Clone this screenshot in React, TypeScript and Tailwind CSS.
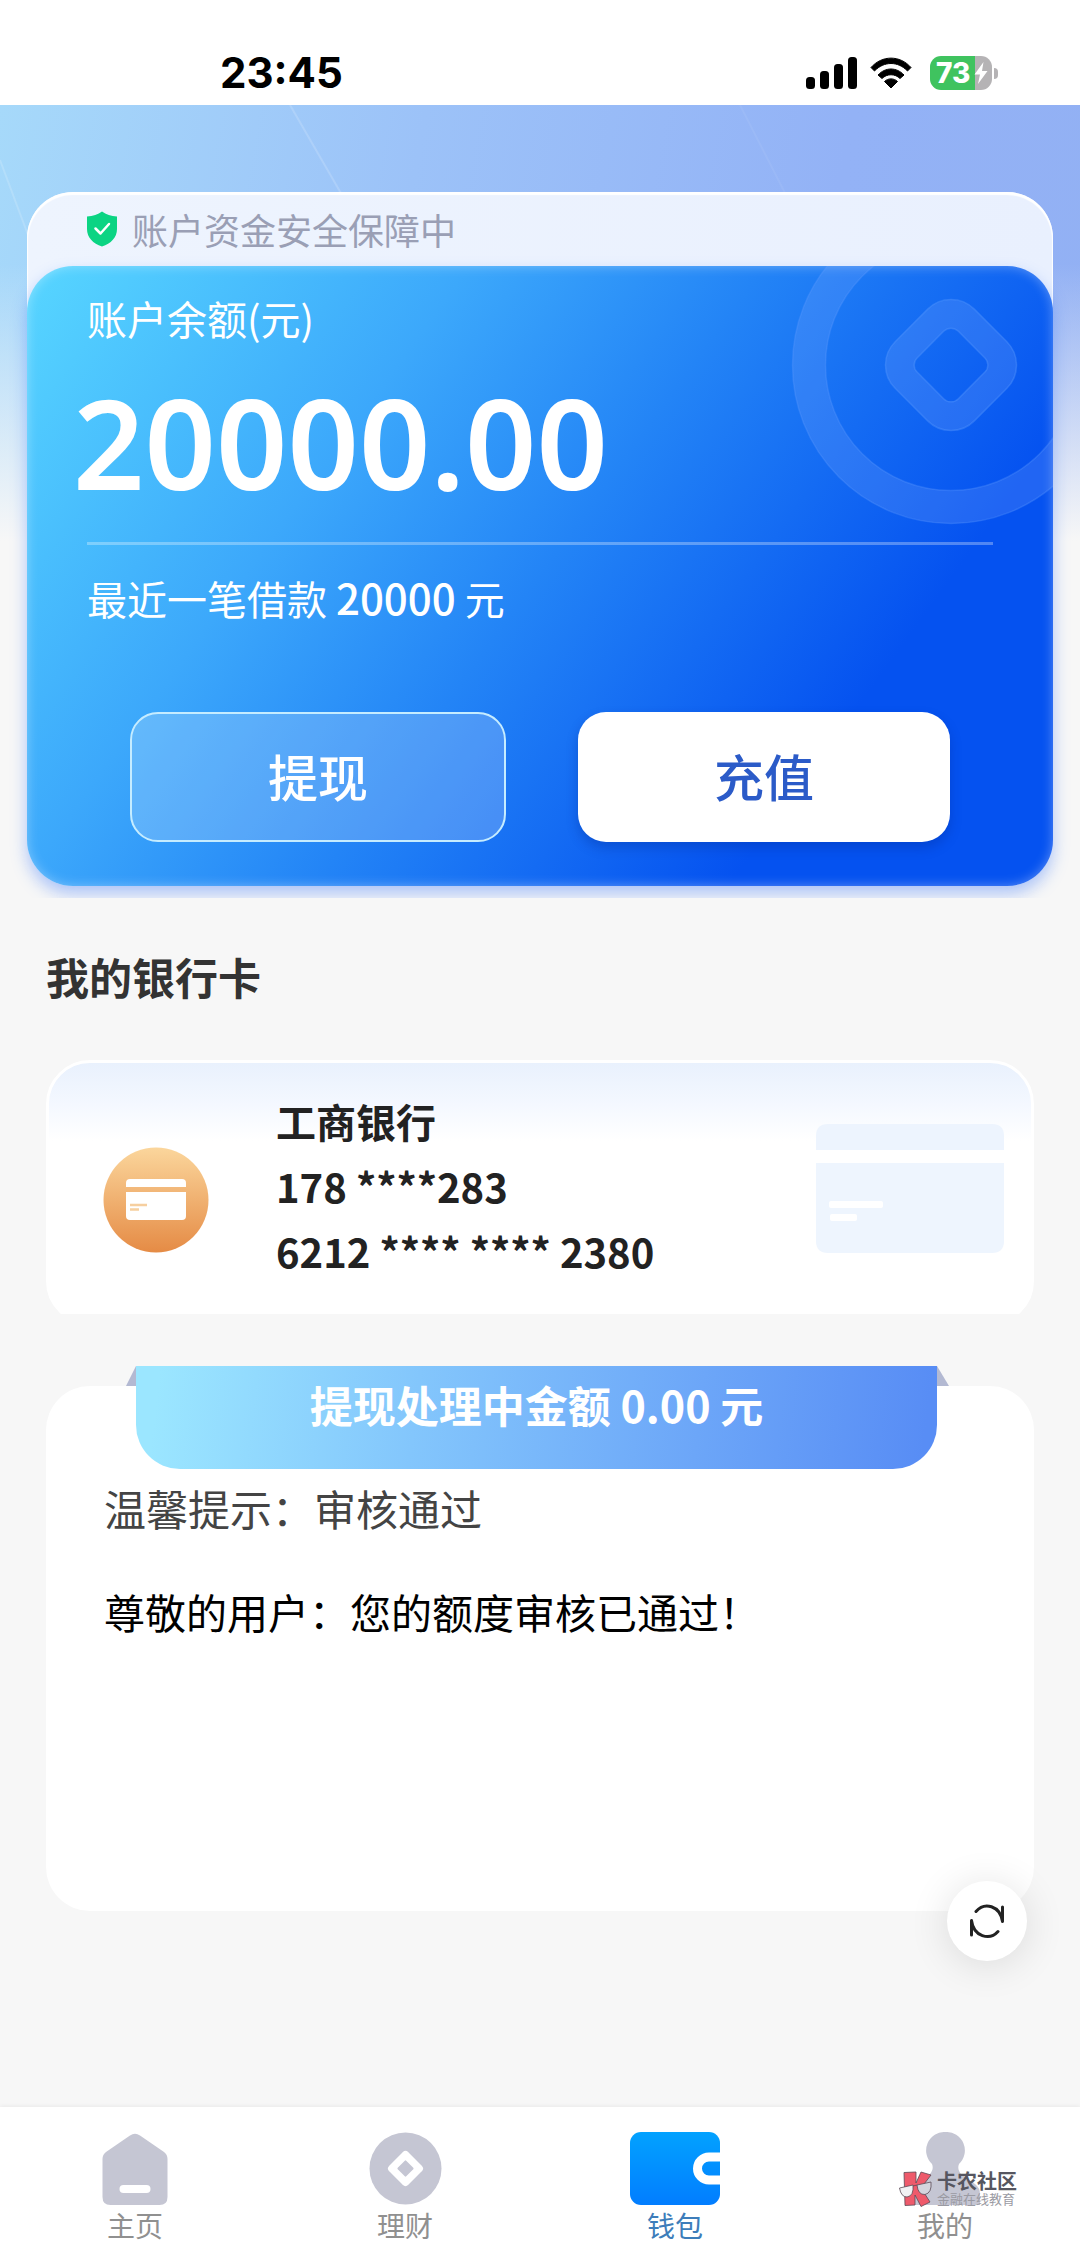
import type { ReactNode } from "react";

function SignalIcon() {
  return (
    <svg width="52" height="34" viewBox="0 0 52 34" aria-hidden="true">
      <rect x="0" y="21" width="9" height="12" rx="3.5" />
      <rect x="14" y="15" width="9" height="18" rx="3.5" />
      <rect x="28" y="8" width="9" height="25" rx="3.5" />
      <rect x="42" y="1" width="9" height="32" rx="3.5" />
    </svg>
  );
}

function WifiIcon() {
  return (
    <svg width="42" height="32" viewBox="0 0 42 32" aria-hidden="true">
      <path d="M1 10.5C12 -2 30 -2 41 10.5L37.5 14C28 4 14 4 4.500 14Z" strokeLinejoin="round" stroke="#000" strokeWidth="1" />
      <path d="M8 18C15.500 10 26.500 10 34 18L30 21.500C25 16.500 17 16.500 12 21.500Z" strokeLinejoin="round" stroke="#000" strokeWidth="1" />
      <path d="M14.500 24.500C18 21 24 21 27.500 24.500L21 31Z" strokeLinejoin="round" stroke="#000" strokeWidth="1" />
    </svg>
  );
}

function Battery() {
  return (
    <div className="flex items-center gap-[2px]">
      <div className="relative flex h-[34px] w-[62px] items-center overflow-hidden rounded-[11px] bg-[linear-gradient(to_right,#3fc35f_72%,#b5b3b5_72%)] pl-[6px]">
        <span className="font-['Inter'] text-[28px] leading-[34px] font-extrabold text-white">73</span>
        <svg width="14" height="22" viewBox="0 0 14 22" className="absolute right-[4px]" aria-hidden="true">
          <path d="M9.500 0L0.500 12.500H6L4 22L13.500 9H8Z" fill="#fff" />
        </svg>
      </div>
      <div className="h-[11px] w-[4px] rounded-r-full bg-[#b5b3b5]" />
    </div>
  );
}

function ShieldIcon() {
  return (
    <svg width="32" height="36" viewBox="0 0 32 36" aria-hidden="true">
      <path d="M16 0.500C20 3.500 25 5 31 5.500V18C31 26.500 25 32.500 16 35.500C7 32.500 1 26.500 1 18V5.500C7 5 12 3.500 16 0.500Z" fill="#0bd483" />
      <path d="M9.500 17.500L14.500 22.500L23 13" fill="none" stroke="#fff" strokeWidth="2.500" strokeLinecap="round" strokeLinejoin="round" />
    </svg>
  );
}

function CoinMark() {
  return (
    <svg width="320" height="320" viewBox="0 0 320 320" className="absolute -top-[61px] -right-[58px]" aria-hidden="true">
      <circle cx="160" cy="160" r="142" fill="none" stroke="#8fb4ff" strokeOpacity="0.2" strokeWidth="33" />
      <circle cx="160" cy="160" r="158.500" fill="none" stroke="#5f9dff" strokeOpacity="0.3" strokeWidth="1.500" />
      <circle cx="160" cy="160" r="125.500" fill="none" stroke="#5f9dff" strokeOpacity="0.3" strokeWidth="1.500" />
      <g transform="rotate(45 160 160)" stroke="#5f9dff" strokeOpacity="0.35" strokeWidth="1.500">
        <path
          fillRule="evenodd"
          fill="#8fb4ff"
          fillOpacity="0.2"
          d="M137 104H183A33 33 0 0 1 216 137V183A33 33 0 0 1 183 216H137A33 33 0 0 1 104 183V137A33 33 0 0 1 137 104ZM141 131A10 10 0 0 0 131 141V179A10 10 0 0 0 141 189H179A10 10 0 0 0 189 179V141A10 10 0 0 0 179 131Z"
        />
      </g>
    </svg>
  );
}

function HeaderRays() {
  return (
    <svg width="100%" height="200" className="absolute top-0 left-0" fill="none" stroke="#fff" strokeOpacity="0.16" strokeWidth="2" aria-hidden="true">
      <path d="M0 55L28 130" />
      <path d="M290 0L342 90" />
      <path d="M740 0L786 90" strokeOpacity="0.06" />
    </svg>
  );
}

function BankBadge() {
  return (
    <svg width="106" height="106" viewBox="0 0 106 106" className="shrink-0" aria-hidden="true">
      <defs>
        <linearGradient id="badge" x1="0" y1="0" x2="0" y2="1">
          <stop offset="0" stopColor="#fbd69c" />
          <stop offset="1" stopColor="#e58b45" />
        </linearGradient>
      </defs>
      <circle cx="53" cy="53" r="52.500" fill="url(#badge)" />
      <path d="M23 40V36Q23 32 27 32H79Q83 32 83 36V40Z" fill="#fff" />
      <path d="M23 45H83V69Q83 73 79 73H27Q23 73 23 69Z" fill="#fff" />
      <path d="M27 58H44M27 62.500H36" stroke="#f6cf9f" strokeWidth="2.500" />
    </svg>
  );
}

function CardWatermark() {
  return (
    <svg width="188" height="130" viewBox="0 0 188 130" className="shrink-0" aria-hidden="true">
      <path d="M0 26V12Q0 0 12 0H176Q188 0 188 12V26Z" fill="#edf4fe" />
      <path d="M0 39H188V117Q188 129 176 129H12Q0 129 0 117Z" fill="#eef5fe" />
      <rect x="13" y="77" width="54" height="7" rx="2" fill="#fff" />
      <rect x="14" y="90" width="27" height="7" rx="2" fill="#fff" />
    </svg>
  );
}

function RefreshIcon() {
  return (
    <svg width="36" height="36" viewBox="0 0 36 36" fill="none" stroke="#222" strokeWidth="3" strokeLinecap="round" strokeLinejoin="round" aria-hidden="true">
      <path d="M7 8.500C15.500 -1.500 31 2.500 33.500 18.500V4" />
      <path d="M29 28.500C20.500 38 4.500 33.500 2.500 17.500V32" />
    </svg>
  );
}

function HomeIcon() {
  return (
    <svg width="66" height="73" viewBox="0 0 66 73" aria-hidden="true">
      <path d="M28 3.500Q33 0 38 3.500L62 20Q65.500 22.500 65.500 27V65Q65.500 73 57.500 73H8.500Q0.500 73 0.500 65V27Q0.500 22.500 4 20Z" fill="#c5c6d3" />
      <rect x="17.500" y="53" width="31" height="8" rx="4" fill="#fff" />
    </svg>
  );
}

function CoinIcon() {
  return (
    <svg width="73" height="73" viewBox="0 0 73 73" aria-hidden="true">
      <circle cx="36.500" cy="36.500" r="36" fill="#c5c6d3" />
      <rect x="23" y="23" width="27" height="27" rx="4" fill="#fff" transform="rotate(45 36.500 36.500)" />
      <rect x="30.500" y="30.500" width="12" height="12" rx="1" fill="#c5c6d3" transform="rotate(45 36.500 36.500)" />
    </svg>
  );
}

function WalletIcon() {
  return (
    <svg width="90" height="73" viewBox="0 0 90 73" aria-hidden="true">
      <defs>
        <linearGradient id="wallet" x1="0" y1="0" x2="0" y2="1">
          <stop offset="0" stopColor="#02a2ff" />
          <stop offset="1" stopColor="#027dff" />
        </linearGradient>
      </defs>
      <rect width="90" height="73" rx="11" fill="url(#wallet)" />
      <path d="M91 25H79A11.500 11.500 0 0 0 79 48H91" fill="none" stroke="#fff" strokeWidth="9" />
    </svg>
  );
}

function PersonIcon() {
  return (
    <svg width="73" height="73" viewBox="0 0 73 73" aria-hidden="true">
      <path d="M36.500 0A18.500 18.500 0 0 1 50 32C48.500 36 49.500 39 52 42L66 52Q71 56 71 62V73H2V62Q2 56 7 52L21 42C23.500 39 24.500 36 23 32A18.500 18.500 0 0 1 36.500 0Z" fill="#c5c6d3" />
    </svg>
  );
}

function CommunityMark() {
  return (
    <div className="pointer-events-none absolute top-[64px] right-[63px] flex items-center gap-[4px]">
      <svg width="34" height="36" viewBox="0 0 34 36" stroke="#5a4a55" strokeWidth="0.8" aria-hidden="true">
        <path d="M5 1.500L17 1V12L22 1L32 4L22 17L31 31L22 35.500L16 24V34L6 34.500Z" fill="#ee5a6b" />
        <path d="M0.500 17L14 14Q15 25 8 26Q2 26 0.500 17Z" fill="#f1f1f3" />
        <path d="M18 14L32 11Q33 22 26 23.500Q19 24 18 14Z" fill="#d4d5de" />
        <path d="M14 15L18 14" />
      </svg>
      <div className="flex flex-col text-left">
        <span className="text-[20px] leading-[20px] font-bold text-[#565660]">卡农社区</span>
        <span className="text-[13px] leading-[16px] text-[#9a9aa2]">金融在线教育</span>
      </div>
    </div>
  );
}

function Tab({ label, active, children }: { label: string; active?: boolean; children: ReactNode }) {
  return (
    <a href="#" className="flex flex-1 flex-col items-center pt-[25px]">
      {children}
      <span className={active ? "text-[28px] leading-[40px] text-[#3d7dba]" : "text-[28px] leading-[40px] text-[#909090]"}>{label}</span>
    </a>
  );
}

export default function App() {
  return (
    <div className="flex min-h-screen flex-col bg-[#f7f7f7] font-['Noto_Sans_CJK_SC',sans-serif]">
      <header className="flex h-[105px] items-end justify-between bg-white pr-[82px] pb-[15px] pl-[220px]">
        <time className="font-['Inter'] text-[42px] leading-[34px] font-bold text-black">23:45</time>
        <div className="flex h-[34px] items-center gap-[12px]">
          <SignalIcon />
          <WifiIcon />
          <div className="pl-[6px]">
            <Battery />
          </div>
        </div>
      </header>

      <main className="flex flex-1 flex-col">
        <section className="relative overflow-hidden bg-[linear-gradient(to_bottom,rgba(247,247,247,0)_20%,#f7f7f7_55%),linear-gradient(100deg,#a6d9fa_0%,#9cc2f8_35%,#93b2f6_70%,#92b0f3_100%)] px-[27px] pt-[87px] pb-[12px]">
          <HeaderRays />
          <div className="relative rounded-[46px] bg-[linear-gradient(90deg,#eef4fe,#e9f0fe)] shadow-[inset_0_2px_1px_1px_#fff]">
            <div className="flex h-[74px] items-center gap-[14px] px-[59px]">
              <ShieldIcon />
              <span className="text-[36px] leading-[48px] text-[#9a9fb5]">账户资金安全保障中</span>
            </div>

            <div className="relative overflow-hidden rounded-[46px] bg-[linear-gradient(126deg,#57d6ff_0%,#3ca8fb_30%,#2384f6_50%,#0552f0_78%)] pt-[28px] pb-[44px] text-white shadow-[0_8px_16px_rgba(60,120,250,0.4),inset_0_0_12px_rgba(255,255,255,0.35)]">
              <CoinMark />
              <p className="px-[60px] text-[40px] leading-[48px]">账户余额(元)</p>
              <p className="px-[46px] font-['Noto_Sans'] text-[125px] leading-[200px] font-semibold">20000.00</p>
              <div className="px-[60px]">
                <hr className="border-t-[3px] border-white/30" />
                <p className="mt-[28px] text-[40px] leading-[48px]">
                  最近一笔借款 <span className="text-[42px] font-medium">20000</span> 元
                </p>
                <div className="mt-[90px] flex gap-[72px] px-[43px]">
                  <button type="button" className="h-[130px] flex-1 rounded-[28px] border-2 border-[#c5ecff] bg-white/20 pb-[4px] text-[50px] font-medium">
                    提现
                  </button>
                  <button type="button" className="h-[130px] flex-1 rounded-[28px] bg-white pb-[4px] text-[50px] font-medium text-[#2b5bc8] shadow-[0_6px_12px_rgba(0,40,140,0.3)]">
                    充值
                  </button>
                </div>
              </div>
            </div>
          </div>
        </section>

        <div className="px-[46px] pt-[48px]">
          <h2 className="text-[43px] leading-[60px] font-bold text-[#333]">我的银行卡</h2>

          <section className="mt-[54px] overflow-hidden">
            <div className="-mb-[11px] flex h-[265px] items-center rounded-[44px] border-[3px] border-white bg-[linear-gradient(to_bottom,#e9f1fd_0%,#f4f8ff_16%,#fff_30%)] pr-[27px] pb-[8px] pl-[54px]">
              <div className="pt-[23px]">
                <BankBadge />
              </div>
              <div className="flex-1 pb-[4px] pl-[67px] text-[40px] leading-[65px] font-bold text-[#222]">
                <p>工商银行</p>
                <p>178 ****283</p>
                <p>6212 **** **** 2380</p>
              </div>
              <CardWatermark />
            </div>
          </section>

          <section className="mt-[52px] flow-root pt-[20px]">
            <div className="flex min-h-[525px] flex-col rounded-[44px] bg-white">
              <div className="relative -mt-[20px] mr-[97px] ml-[90px] h-[103px] rounded-b-[44px] bg-[linear-gradient(97deg,#9be6ff_3%,#83c6fc_35%,#6ca6f8_70%,#588df5_98%)] text-center text-[43px] leading-[76px] font-bold text-white">
                <svg width="10" height="20" viewBox="0 0 10 20" className="absolute top-0 -left-[10px]" aria-hidden="true">
                  <path d="M10 0V20H0Z" fill="#b3b9d2" />
                </svg>
                提现处理中金额 0.00 元
                <svg width="12" height="20" viewBox="0 0 12 20" className="absolute top-0 -right-[12px]" aria-hidden="true">
                  <path d="M0 0V20H12Z" fill="#b3b9d2" />
                </svg>
              </div>
              <div className="px-[58px] pt-[9px] leading-[60px]">
                <p className="text-[42px] text-[#444]">温馨提示：审核通过</p>
                <p className="mt-[43px] text-[41px] text-black">尊敬的用户：您的额度审核已通过！</p>
              </div>
            </div>
          </section>
        </div>
      </main>

      <button
        type="button"
        aria-label="刷新"
        className="fixed right-[53px] bottom-[299px] flex size-[80px] items-center justify-center rounded-full bg-white shadow-[0_4px_40px_rgba(0,0,0,0.12)]"
      >
        <RefreshIcon />
      </button>

      <nav className="relative flex h-[153px] bg-white shadow-[0_-1px_4px_rgba(0,0,0,0.06)]">
        <Tab label="主页">
          <HomeIcon />
        </Tab>
        <Tab label="理财">
          <CoinIcon />
        </Tab>
        <Tab label="钱包" active>
          <WalletIcon />
        </Tab>
        <Tab label="我的">
          <PersonIcon />
        </Tab>
        <CommunityMark />
      </nav>
    </div>
  );
}
